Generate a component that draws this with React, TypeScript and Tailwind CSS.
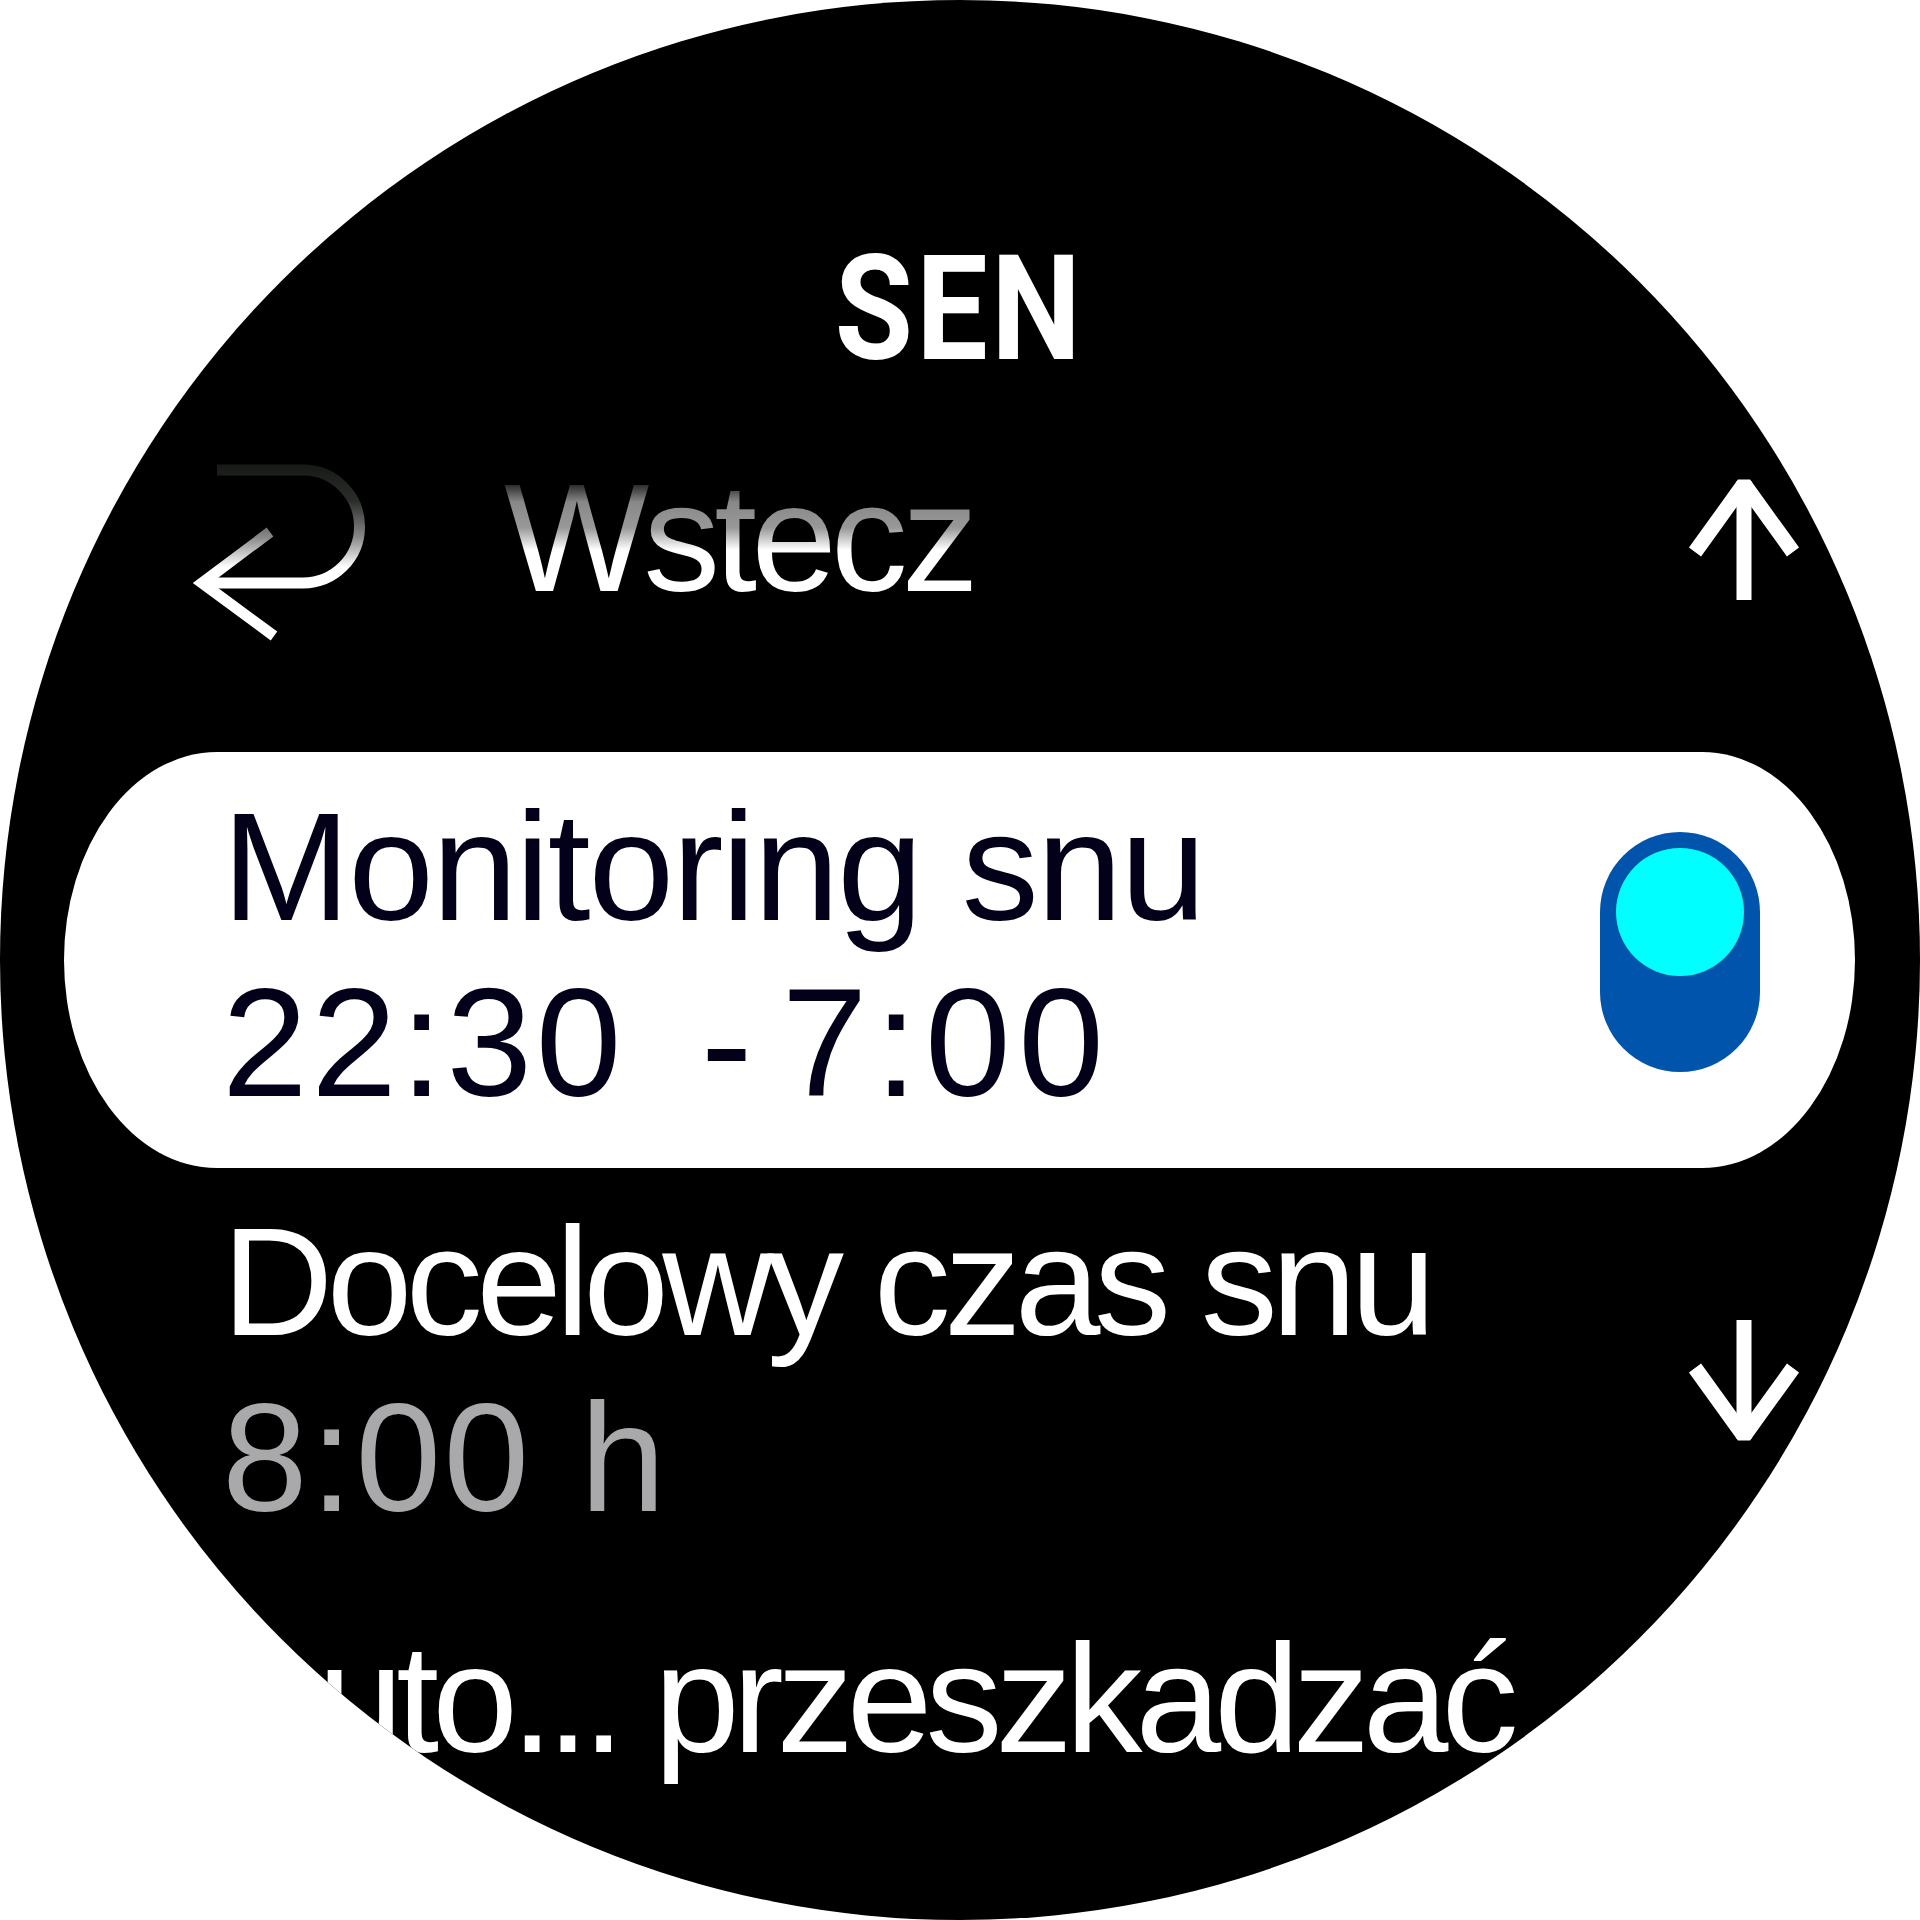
import React from 'react';

const sans = "font-['Liberation_Sans',Arial,sans-serif]";

const BackIcon = () => (
  <svg width="190" height="185" viewBox="0 0 190 185" fill="none">
    <defs>
      <linearGradient id="fade" x1="0" y1="0" x2="0" y2="185" gradientUnits="userSpaceOnUse">
        <stop offset="0" stopColor="#141714" />
        <stop offset="0.22" stopColor="#2a2d2a" />
        <stop offset="0.42" stopColor="#8a8a8a" />
        <stop offset="0.58" stopColor="#ffffff" />
      </linearGradient>
    </defs>
    <path d="M22 123 H123 A56.5 56.5 0 0 0 123 10 H37" stroke="url(#fade)" strokeWidth="11" />
    <path d="M90 72 L22 123 L94 176" stroke="url(#fade)" strokeWidth="11" strokeLinejoin="miter" />
  </svg>
);

const UpArrow = () => (
  <svg width="112" height="128" viewBox="0 0 112 128" fill="none" stroke="white">
    <path d="M56 9 V128" strokeWidth="15" />
    <path d="M7 80 L56 12 L105 80" strokeWidth="15" strokeLinejoin="bevel" />
  </svg>
);

const DownArrow = () => (
  <svg width="112" height="128" viewBox="0 0 112 128" fill="none" stroke="white">
    <path d="M56 0 V119" strokeWidth="15" />
    <path d="M7 48 L56 116 L105 48" strokeWidth="15" strokeLinejoin="bevel" />
  </svg>
);

const Toggle = () => (
  <div className="w-[160px] h-[240px] rounded-full bg-[#0054ab] flex justify-center pt-[16px]">
    <div className="w-[128px] h-[128px] rounded-full bg-[#00ffff]" />
  </div>
);

export default function App() {
  return (
    <div className="w-[1920px] h-[1920px] bg-white">
      <div className={`w-full h-full rounded-full bg-black overflow-hidden flex flex-col ${sans}`}>
        <div className="mt-[237px] h-[146px] flex justify-center">
          <span className="inline-block scale-x-[0.87] font-['Roboto',sans-serif] font-bold text-[146px] leading-[146px] tracking-[4px] text-white">
            SEN
          </span>
        </div>

        <div className="mt-[67px] h-[176px] flex items-start pl-[180px] pr-[120px]">
          <div className="mt-[10px]">
            <BackIcon />
          </div>
          <div className="ml-[134px] text-[154px] leading-[176px] tracking-[-6px] whitespace-nowrap text-transparent bg-clip-text bg-[linear-gradient(to_bottom,#111_30px,#888_52px,#999_78px,#fff_100px)]">
            Wstecz
          </div>
          <div className="ml-auto mt-[22px]">
            <UpArrow />
          </div>
        </div>

        <div className="mt-[126px] ml-[64px] w-[1791px] h-[416px] bg-white rounded-[153px/208px] flex items-start pl-[158px] pt-[27px]">
          <div className="flex flex-col text-[154px] leading-[176px] text-[#03001a] whitespace-nowrap">
            <div className="tracking-[-2px]">Monitoring snu</div>
            <div className="flex tracking-[3.5px]">
              <span>22:30</span>
              <span className="ml-[76px]">-</span>
              <span className="ml-[26px] tracking-[7.5px]">7:00</span>
            </div>
          </div>
          <div className="ml-auto mr-[95px] mt-[53px]">
            <Toggle />
          </div>
        </div>

        <div className="mt-[26px] flex items-start pl-[222px] pr-[120px]">
          <div className="flex flex-col text-[154px] leading-[176px] whitespace-nowrap">
            <div className="tracking-[-6.5px] text-white">Docelowy czas snu</div>
            <div className="tracking-[2.5px] [word-spacing:3px] text-[#a9a9ab]">8:00 h</div>
          </div>
          <div className="ml-auto mt-[126px]">
            <DownArrow />
          </div>
        </div>

        <div className="mt-[65px] pl-[222px] text-[154px] leading-[176px] tracking-[-7px] text-white whitespace-nowrap">
          Auto... przeszkadzać
        </div>
      </div>
    </div>
  );
}
